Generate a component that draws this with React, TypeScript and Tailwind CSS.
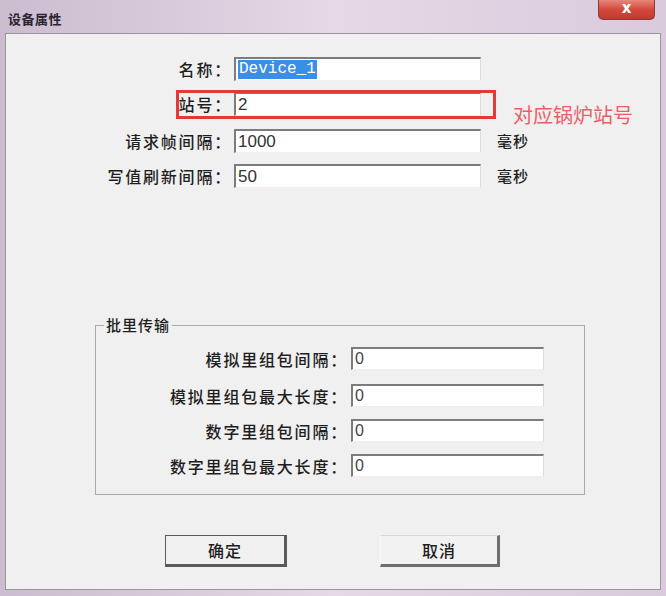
import React from 'react'

const cjk = "font-['Noto_Sans_CJK_SC',sans-serif]"
const sunken =
  'bg-white border-t-2 border-l-2 border-t-[#7c7c7c] border-l-[#7c7c7c] border-r border-b border-r-[#dcdcdc] border-b-[#efefef]'

function Row({ label, value, unit, mono }: { label: string; value: string; unit?: string; mono?: boolean }) {
  return (
    <div className="flex items-center h-[24px]">
      <div className={`w-[228px] pr-[2px] text-right text-[16px] tracking-[1.8px] font-medium text-[#1e1e1e] ${cjk}`}>{label}</div>
      <div className={`w-[247px] h-[24px] flex items-center pl-[2px] ${sunken}`}>
        {mono ? (
          <span className="bg-[#3a8ee6] text-white font-['Liberation_Mono',monospace] text-[16px] leading-[19px] px-[1px]">
            {value}
          </span>
        ) : (
          <span className="font-['Liberation_Sans',sans-serif] text-[17px] text-[#333]">{value}</span>
        )}
      </div>
      {unit && (
        <div className={`ml-[16px] text-[15px] tracking-[1px] font-medium text-[#1e1e1e] ${cjk}`}>{unit}</div>
      )}
    </div>
  )
}

function GroupRow({ label, value }: { label: string; value: string }) {
  return (
    <div className="flex items-center h-[23px]">
      <div className={`w-[255px] pr-[3px] text-right text-[16px] tracking-[1.8px] font-medium text-[#1e1e1e] ${cjk}`}>{label}</div>
      <div className={`w-[193px] h-[23px] flex items-center pl-[2px] ${sunken}`}>
        <span className="font-['Liberation_Sans',sans-serif] text-[16px] text-[#444]">{value}</span>
      </div>
    </div>
  )
}

export default function App() {
  return (
    <div className="w-[666px] h-[596px] overflow-hidden flex flex-col bg-gradient-to-r from-[#cbbccf] via-[#e6d8e6] to-[#d9cbdc]">
      {/* title bar */}
      <div className="h-[33px] flex items-start justify-between pl-[8px] pr-[11px]">
        <div className={`mt-[9px] text-[13px] tracking-[0.5px] font-semibold text-[#2a2530] ${cjk}`}>设备属性</div>
        <div className="w-[57px] h-[20px] rounded-b-[5px] border border-t-0 border-[#8b3c34] bg-gradient-to-b from-[#e8867a] via-[#d4493c] to-[#c0392e] flex items-center justify-center">
          <span className="text-white font-bold text-[15px] leading-none font-['DejaVu_Sans',sans-serif] -mt-[2px]">x</span>
        </div>
      </div>

      {/* client area */}
      <div className="mx-[5px] h-[557px] bg-[#f0f0f0] border border-[#9a94a0] relative flex flex-col pt-[23px]">
        <Row label="名称：" value="Device_1" mono />
        <div className="mt-[11px] relative">
          <Row label="站号：" value="2" />
          <div className="absolute left-[170px] top-[-2px] w-[320px] h-[29px] border-[3px] border-[#e23a3a] pointer-events-none" />
          <div className={`absolute left-[507px] top-[8px] text-[20px] text-[#ea5f66] whitespace-nowrap ${cjk}`}>对应锅炉站号</div>
        </div>
        <div className="mt-[13px]">
          <Row label="请求帧间隔：" value="1000" unit="毫秒" />
        </div>
        <div className="mt-[11px]">
          <Row label="写值刷新间隔：" value="50" unit="毫秒" />
        </div>

        {/* group box */}
        <div className="mt-[137px] ml-[89px] w-[490px] h-[170px] border border-[#a9a9a9] relative pt-[21px] flex flex-col">
          <span className={`absolute left-[8px] -top-[11px] bg-[#f0f0f0] px-[2px] text-[15px] leading-[20px] tracking-[1px] font-medium text-[#1e1e1e] ${cjk}`}>
            批里传输
          </span>
          <GroupRow label="模拟里组包间隔：" value="0" />
          <div className="mt-[14px]">
            <GroupRow label="模拟里组包最大长度：" value="0" />
          </div>
          <div className="mt-[12px]">
            <GroupRow label="数字里组包间隔：" value="0" />
          </div>
          <div className="mt-[12px]">
            <GroupRow label="数字里组包最大长度：" value="0" />
          </div>
        </div>

        {/* buttons */}
        <div className="mt-[40px] ml-[159px] flex gap-[93px]">
          <button className={`w-[122px] h-[32px] bg-[#f0f0f0] border border-[#5a5a5a] border-b-[3px] border-r-[3px] text-[16px] tracking-[1px] font-medium text-[#1e1e1e] ${cjk}`}>
            确定
          </button>
          <button className={`w-[120px] h-[32px] bg-[#f2f2f2] border border-t-[#d8d8d8] border-l-[#f8f8f8] border-b-[3px] border-r-[3px] border-b-[#6e6e6e] border-r-[#6e6e6e] text-[16px] tracking-[1px] font-medium text-[#1e1e1e] ${cjk}`}>
            取消
          </button>
        </div>
      </div>
    </div>
  )
}
